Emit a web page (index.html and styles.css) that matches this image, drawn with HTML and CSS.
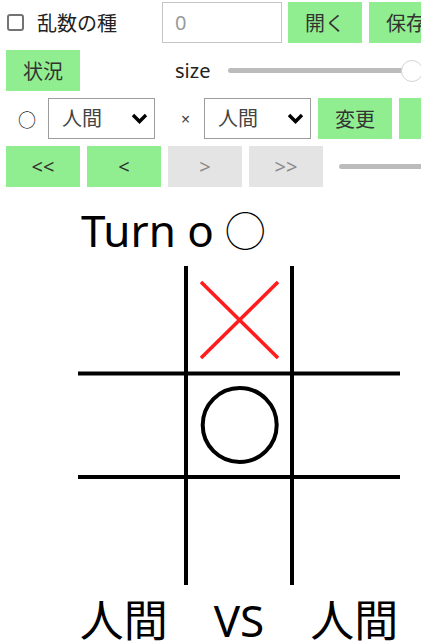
FILE: index.html
```html
<!DOCTYPE html>
<html lang="ja">

<head>
    <meta charset="UTF-8">
    <link rel="stylesheet" href="styles.css">
</head>

<body>
    <div class="controls">
        <div class="row">
            <label class="seed"><span class="seed-box"></span>乱数の種</label>
            <input type="text" class="seed-input" placeholder="0">
            <button class="btn">開く</button>
            <button class="btn">保存</button>
        </div>

        <div class="row">
            <button class="btn">状況</button>
            <span class="size-label">size</span>
            <input type="range" class="size-range" min="3" max="10" value="10">
        </div>

        <div class="row">
            <span class="mark mark-o">○</span>
            <div class="select-wrap">
                <select class="player-select">
                    <option>人間</option>
                    <option>CPU</option>
                </select>
                <svg class="chevron" width="17" height="11" viewBox="0 0 17 11">
                    <path d="M2 2 L8.5 8.5 L15 2" fill="none" stroke="#000" stroke-width="3.4" />
                </svg>
            </div>
            <span class="mark mark-x">×</span>
            <div class="select-wrap">
                <select class="player-select">
                    <option>人間</option>
                    <option>CPU</option>
                </select>
                <svg class="chevron" width="17" height="11" viewBox="0 0 17 11">
                    <path d="M2 2 L8.5 8.5 L15 2" fill="none" stroke="#000" stroke-width="3.4" />
                </svg>
            </div>
            <button class="btn">変更</button>
            <button class="btn btn-wide">リセット</button>
        </div>

        <div class="row">
            <button class="btn">&lt;&lt;</button>
            <button class="btn">&lt;</button>
            <button class="btn" disabled>&gt;</button>
            <button class="btn" disabled>&gt;&gt;</button>
            <input type="range" class="step-range" min="0" max="2" value="2">
        </div>
    </div>

    <div class="turn">Turn o <span class="turn-mark">◯</span></div>

    <svg class="board" width="322" height="320" viewBox="0 0 322 320">
        <g stroke="#000" stroke-width="4">
            <line x1="108" y1="0" x2="108" y2="319" />
            <line x1="214" y1="0" x2="214" y2="319" />
            <line x1="0" y1="107.5" x2="322" y2="107.5" />
            <line x1="0" y1="211" x2="322" y2="211" />
        </g>
        <g stroke="#ff1c1c" stroke-width="3.6">
            <line x1="123" y1="16" x2="200" y2="92" />
            <line x1="200" y1="16" x2="123" y2="92" />
        </g>
        <circle cx="161.7" cy="159" r="37" fill="none" stroke="#000" stroke-width="4" />
    </svg>

    <div class="players">
        <span>人間</span>
        <span>VS</span>
        <span>人間</span>
    </div>
</body>

</html>
```

FILE: styles.css
```css
html,
body {
    overflow: hidden;
}

body {
    margin: 0;
    padding: 2px 0 0 6px;
    font-family: "Noto Sans", "Noto Sans CJK JP", sans-serif;
    font-size: 20px;
    color: #222;
    background: #fff;
}

.controls {
    display: flex;
    flex-direction: column;
    gap: 7px;
}

.row {
    display: flex;
    align-items: center;
    gap: 7px;
    height: 41px;
    flex-wrap: nowrap;
}

.row > * {
    flex-shrink: 0;
}

.btn {
    width: 74px;
    height: 41px;
    border: none;
    background-color: #90ee90;
    color: #333;
    font-family: inherit;
    font-size: 20px;
    padding: 0;
}

.btn:disabled {
    background-color: #e4e4e4;
    color: #8a8a8a;
}

.btn-wide {
    width: 120px;
    padding-left: 30px;
}

.seed {
    display: flex;
    align-items: center;
    width: 149px;
    color: #222;
}

.seed-box {
    flex: none;
    width: 17px;
    height: 17px;
    box-sizing: border-box;
    border: 2px solid #737373;
    border-radius: 3px;
    background: #fff;
    margin: 0 13px 0 1px;
}

.seed-input {
    width: 120px;
    height: 41px;
    box-sizing: border-box;
    border: 1px solid #c4c4c4;
    padding: 0 12px;
    font-family: inherit;
    font-size: 20px;
    margin-right: -1px;
}

.seed-input::placeholder {
    color: #9a9a9a;
}

.size-label {
    width: 134px;
    padding-left: 88px;
    box-sizing: border-box;
}

input[type="range"] {
    -webkit-appearance: none;
    appearance: none;
    background: transparent;
    margin: 0;
    height: 24px;
}

input[type="range"]::-webkit-slider-runnable-track {
    height: 5px;
    background: #bcbcbc;
    border-radius: 3px;
}

input[type="range"]::-webkit-slider-thumb {
    -webkit-appearance: none;
    width: 22px;
    height: 22px;
    margin-top: -8.5px;
    border-radius: 50%;
    background: #fff;
    border: 1px solid #d4d4d4;
    box-sizing: border-box;
}

.size-range {
    width: 195px;
}

.step-range {
    width: 200px;
    margin-left: 9px !important;
}

.mark {
    text-align: center;
}

.mark-o {
    width: 42px;
    margin-right: -7px;
    font-size: 18px;
}

.mark-x {
    width: 49px;
    padding-left: 12px;
    box-sizing: border-box;
    margin: 0 -7px;
    font-size: 16px;
    color: #444;
}

.select-wrap {
    display: flex;
    align-items: center;
    width: 107px;
    height: 41px;
}

.player-select {
    -webkit-appearance: none;
    appearance: none;
    width: 107px;
    height: 41px;
    border: 1px solid #9c9c9c;
    border-radius: 0;
    background: #fff;
    padding: 0 0 0 13px;
    font-family: inherit;
    font-size: 20px;
    color: #444;
}

.chevron {
    margin-left: -24px;
    pointer-events: none;
}

.turn {
    font-size: 44px;
    line-height: 52px;
    margin: 17px 0 0 75px;
    color: #000;
}

.turn-mark {
    font-size: 40px;
    vertical-align: 1px;
}

.board {
    display: block;
    margin: 9px 0 0 72px;
}

.players {
    display: flex;
    justify-content: center;
    gap: 46px;
    width: 322px;
    margin: 8px 0 0 72px;
    font-size: 44px;
    line-height: 52px;
    color: #000;
}
```
